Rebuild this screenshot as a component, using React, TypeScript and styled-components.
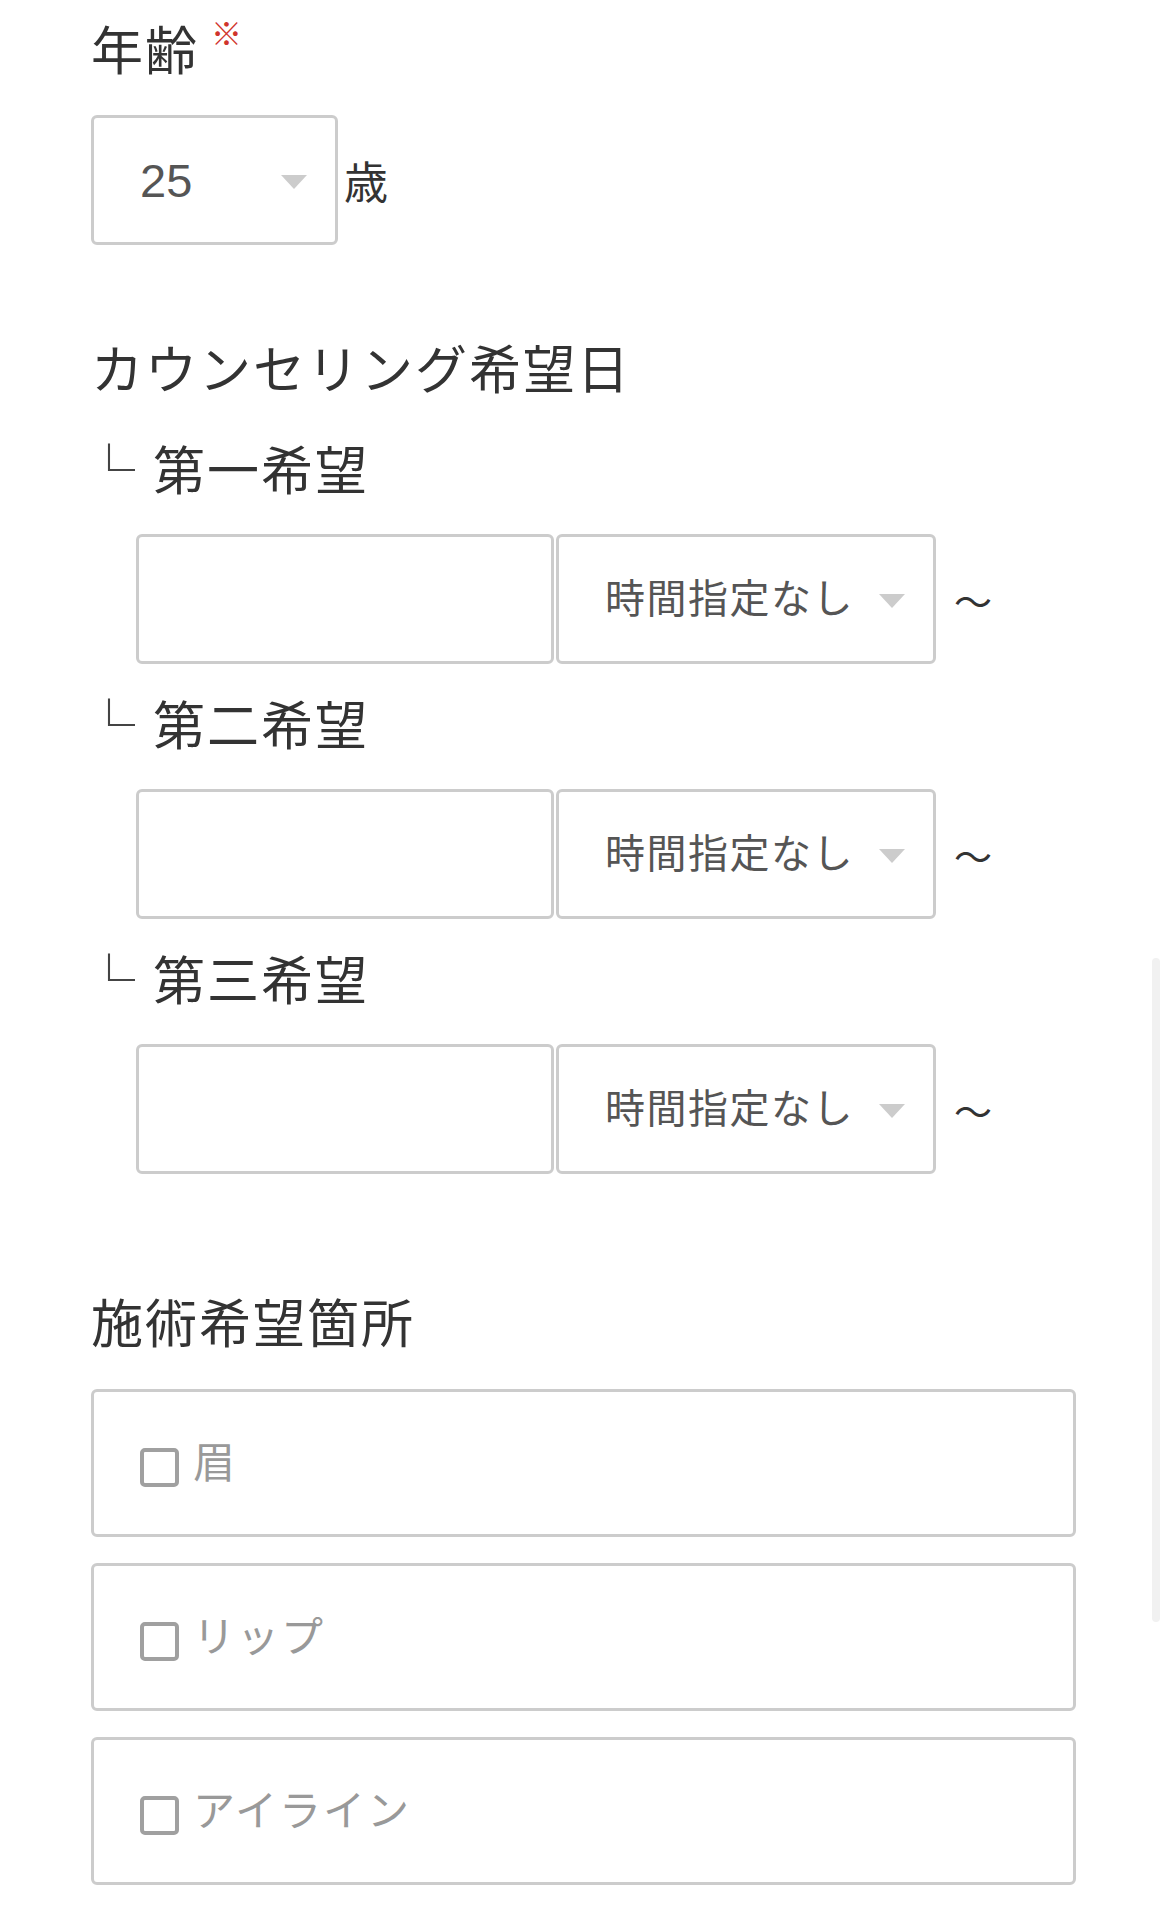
import React from "react";
import styled, { createGlobalStyle } from "styled-components";

const GlobalStyle = createGlobalStyle`
  html, body {
    margin: 0;
    padding: 0;
    background: #ffffff;
  }
  body {
    font-family: "Liberation Sans", "Noto Sans CJK JP", sans-serif;
    color: #333333;
  }
  * { box-sizing: border-box; }
`;

const Page = styled.form`
  position: relative;
  width: 1170px;
  min-height: 1919px;
  padding: 22px 94px 0 91px;
`;

const Label = styled.div<{ $mt?: number }>`
  font-family: "Noto Sans CJK JP", sans-serif;
  font-size: 52px;
  line-height: 52px;
  letter-spacing: 2px;
  color: #333333;
  margin-top: ${(p) => p.$mt ?? 0}px;
  white-space: nowrap;
`;

const Required = styled.span`
  display: inline-block;
  vertical-align: top;
  font-size: 31px;
  line-height: 31px;
  letter-spacing: 0;
  color: #d0342c;
  margin-left: 12px;
  margin-top: -6px;
`;

const Corner = styled.span`
  display: inline-block;
  width: 52px;
  margin-left: -8px;
  margin-right: 18px;
  letter-spacing: 0;
  color: #444444;
`;

const Row = styled.div<{ $mt: number; $indent?: number }>`
  display: flex;
  align-items: center;
  margin-top: ${(p) => p.$mt}px;
  padding-left: ${(p) => p.$indent ?? 0}px;
`;

const SelectWrap = styled.div<{ $w: number }>`
  position: relative;
  width: ${(p) => p.$w}px;
  height: 130px;
  flex: none;
  &::after {
    content: "";
    position: absolute;
    right: 31px;
    top: 60px;
    width: 0;
    height: 0;
    border-left: 13px solid transparent;
    border-right: 13px solid transparent;
    border-top: 14px solid #cccccc;
    pointer-events: none;
  }
`;

const Select = styled.select<{ $fs: number; $ls?: number }>`
  appearance: none;
  -webkit-appearance: none;
  width: 100%;
  height: 100%;
  margin: 0;
  border: 3px solid #cccccc;
  border-radius: 6px;
  background: #ffffff;
  padding: 0 60px 0 46px;
  font-family: "Liberation Sans", "Noto Sans CJK JP", sans-serif;
  font-size: ${(p) => p.$fs}px;
  letter-spacing: ${(p) => p.$ls ?? 0}px;
  color: #555555;
  outline: none;
`;

const Unit = styled.span`
  font-family: "Noto Sans CJK JP", sans-serif;
  font-size: 44px;
  color: #333333;
  margin-left: 6px;
`;

const DateInput = styled.input`
  width: 418px;
  height: 130px;
  flex: none;
  margin: 0 2px 0 0;
  border: 3px solid #cccccc;
  border-radius: 6px;
  background: #ffffff;
  padding: 0 20px;
  font-size: 40px;
  outline: none;
`;

const Tilde = styled.span`
  font-family: "Noto Sans CJK JP", sans-serif;
  font-size: 38px;
  color: #333333;
  margin-left: 18px;
`;

const CardList = styled.div`
  display: flex;
  flex-direction: column;
  gap: 26px;
  margin-top: 42px;
`;

const Card = styled.label`
  display: flex;
  align-items: center;
  height: 148px;
  border: 3px solid #cccccc;
  border-radius: 6px;
  padding-left: 46px;
  background: #ffffff;
`;

const Check = styled.input`
  appearance: none;
  -webkit-appearance: none;
  width: 39px;
  height: 39px;
  margin: 8px 0 0 0;
  border: 4px solid #a0a0a0;
  border-radius: 5px;
  background: #ffffff;
  flex: none;
`;

const CheckText = styled.span`
  font-family: "Noto Sans CJK JP", sans-serif;
  font-size: 42px;
  letter-spacing: 2px;
  color: #999999;
  margin-left: 14px;
  margin-bottom: 8px;
`;

const ScrollIndicator = styled.div`
  position: absolute;
  left: 1152px;
  top: 958px;
  width: 8px;
  height: 664px;
  border-radius: 4px;
  background: #f1f1f1;
`;

const preferences = ["第一希望", "第二希望", "第三希望"];
const areas = ["眉", "リップ", "アイライン"];

export default function App() {
  return (
    <>
      <GlobalStyle />
      <Page>
        <Label>
          年齢<Required>※</Required>
        </Label>
        <Row $mt={41}>
          <SelectWrap $w={247}>
            <Select $fs={47} defaultValue="25">
              {Array.from({ length: 60 }, (_, i) => i + 15).map((n) => (
                <option key={n} value={String(n)}>
                  {n}
                </option>
              ))}
            </Select>
          </SelectWrap>
          <Unit>歳</Unit>
        </Row>

        <Label $mt={96}>カウンセリング希望日</Label>
        {preferences.map((p, i) => (
          <React.Fragment key={p}>
            <Label $mt={i === 0 ? 49 : 33}>
              <Corner>└</Corner>
              {p}
            </Label>
            <Row $mt={40} $indent={45}>
              <DateInput type="text" />
              <SelectWrap $w={380}>
                <Select $fs={40} $ls={1.5} defaultValue="">
                  <option value="">時間指定なし</option>
                  <option value="10">10:00</option>
                  <option value="11">11:00</option>
                </Select>
              </SelectWrap>
              <Tilde>〜</Tilde>
            </Row>
          </React.Fragment>
        ))}

        <Label $mt={121}>施術希望箇所</Label>
        <CardList>
          {areas.map((a) => (
            <Card key={a}>
              <Check type="checkbox" />
              <CheckText>{a}</CheckText>
            </Card>
          ))}
        </CardList>
        <ScrollIndicator />
      </Page>
    </>
  );
}
